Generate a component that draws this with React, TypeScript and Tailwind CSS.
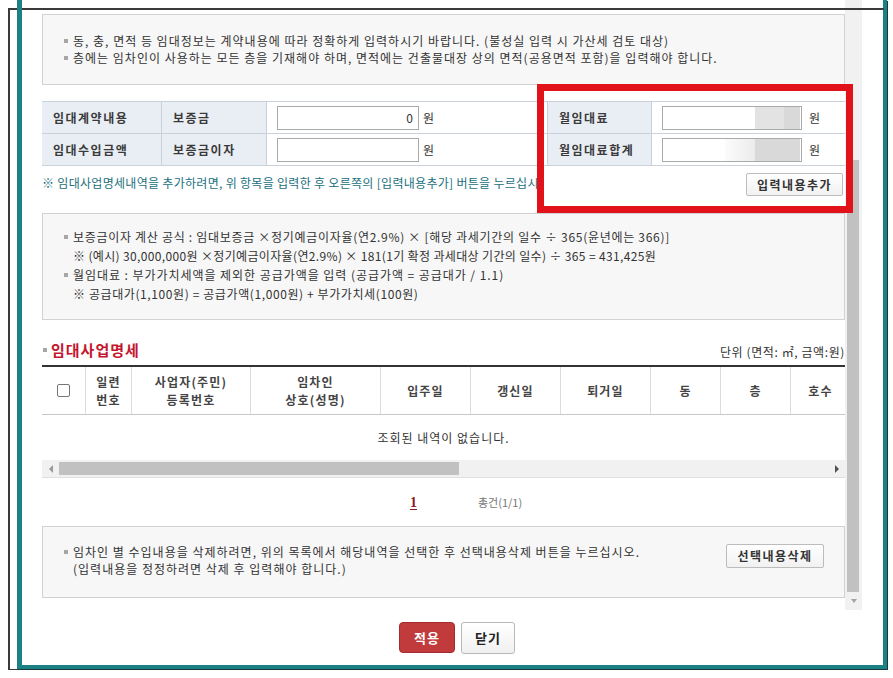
import React from "react";

const Bullet = ({ className = "" }: { className?: string }) => (
  <span className={"inline-block w-[4px] h-[4px] bg-[#a6a6a6] shrink-0 " + className} />
);

function MaskedInput({ row }: { row: 1 | 2 }) {
  return (
    <div className="w-[140px] h-[24px] border border-[#aaaaaa] bg-white flex justify-end pr-[1px]">
      {row === 1 ? (
        <>
          <div className="w-[29px] h-full bg-[#e3e3e3]" />
          <div className="w-[16px] h-full bg-[#d9d9d9]" />
        </>
      ) : (
        <>
          <div className="w-[30px] h-full bg-gradient-to-r from-[#fbfbfb] to-[#ececec]" />
          <div className="w-[45px] h-full bg-[#d9d9d9]" />
        </>
      )}
    </div>
  );
}

const headCols: { w: string; label: React.ReactNode }[] = [
  { w: "w-[46px]", label: <>일련<br />번호</> },
  { w: "w-[119px]", label: <>사업자(주민)<br />등록번호</> },
  { w: "w-[130px]", label: <>임차인<br />상호(성명)</> },
  { w: "w-[90px]", label: "입주일" },
  { w: "w-[90px]", label: "갱신일" },
  { w: "w-[90px]", label: "퇴거일" },
  { w: "w-[70px]", label: "동" },
  { w: "w-[70px]", label: "층" },
  { w: "w-[60px]", label: "호수" },
  { w: "w-[90px]", label: "전용면적" },
  { w: "w-[90px]", label: "공용면적" },
  { w: "w-[110px]", label: "보증금" },
  { w: "w-[110px]", label: "월임대료" },
];

const label =
  "bg-[#e9eef5] border-[#c9d1dc] flex items-center font-bold text-[12px] tracking-[1.5px] text-[#3a3a3a]";

const btn =
  "border border-[#bcbcbc] rounded-[2px] bg-gradient-to-b from-white to-[#f1f1f1] font-bold tracking-[1.5px] text-[#333] text-[12px] leading-none";

export default function App() {
  return (
    <div className="relative w-[893px] h-[678px] bg-white overflow-hidden font-['Noto_Sans_CJK_KR',sans-serif] text-[12px] text-[#333]">
      {/* window frame behind */}
      <div className="absolute left-[8px] top-[8px] w-[877px] h-[662px] border-l-2 border-t-2 border-b border-[#3a3a3a]" />

      {/* main panel */}
      <div className="relative ml-[17px] w-[870px] h-[669px] bg-white border-l-[5px] border-r-4 border-b-4 border-[#1b8184] shadow-[1px_1px_0_#163a3c] flex flex-col">
        <div className="flex h-[610px]">
          <div className="w-[823px] pl-[20px] overflow-hidden">
            <div className="w-[803px]">
              {/* info box 1 */}
              <div className="mt-[14px] h-[71px] border border-[#d2d2d2] bg-[#f7f7f7] pt-[17px] pl-[21px] leading-[17px] tracking-[1px] whitespace-nowrap">
                <div className="flex items-center">
                  <Bullet className="mr-[5px]" />
                  <span>동, 충, 면적 등 임대정보는 계약내용에 따라 정확하게 입력하시기 바랍니다. (불성실 입력 시 가산세 검토 대상)</span>
                </div>
                <div className="flex items-center">
                  <Bullet className="mr-[5px]" />
                  <span>층에는 임차인이 사용하는 모든 층을 기재해야 하며, 면적에는 건출물대장 상의 면적(공용면적 포함)을 입력해야 합니다.</span>
                </div>
              </div>

              {/* form table */}
              <div className="mt-[16px] border-t border-[#c9d1dc]">
                {[1, 2].map((r) => (
                  <div key={r} className="flex h-[32px] border-b border-[#c9d1dc]">
                    <div className={"w-[120px] border-r pl-[11px] " + label}>
                      {r === 1 ? "임대계약내용" : "임대수입금액"}
                    </div>
                    <div className={"w-[105px] border-r pl-[11px] " + label}>
                      {r === 1 ? "보증금" : "보증금이자"}
                    </div>
                    <div className="w-[280px] pl-[10px] flex items-center">
                      <div className="w-[142px] h-[24px] border border-[#aaaaaa] bg-white flex items-center justify-end pr-[5px]">
                        {r === 1 ? "0" : ""}
                      </div>
                      <span className="ml-[4px]">원</span>
                    </div>
                    <div className={"w-[105px] border-x pl-[11px] " + label}>
                      {r === 1 ? "월임대료" : "월임대료합계"}
                    </div>
                    <div className="flex-1 pl-[10px] flex items-center">
                      <MaskedInput row={r as 1 | 2} />
                      <span className="ml-[7px]">원</span>
                    </div>
                  </div>
                ))}
              </div>

              {/* note row */}
              <div className="h-[47px] flex justify-between items-start pt-[7px]">
                <div className="w-[502px] overflow-hidden whitespace-nowrap mt-[1px] leading-[17px] text-[#21707d] tracking-[0.3px]">
                  ※ 임대사업명세내역을 추가하려면, 위 항목을 입력한 후 오른쪽의 [입력내용추가] 버튼을 누르십시오.
                </div>
                <button className={"mr-[2px] w-[97px] h-[23px] " + btn}>입력내용추가</button>
              </div>

              {/* info box 2 */}
              <div className="h-[107px] border border-[#d2d2d2] bg-[#f7f7f7] pt-[13px] pl-[21px] leading-[19px] whitespace-nowrap">
                <div className="flex items-center tracking-[0.7px]">
                  <Bullet className="mr-[5px]" />
                  <span>보증금이자 계산 공식 : 임대보증금 ×정기예금이자율(연2.9%) × [해당 과세기간의 일수 ÷ 365(윤년에는 366)]</span>
                </div>
                <div className="pl-[9px] tracking-[0.35px]">※ (예시) 30,000,000원 ×정기예금이자율(연2.9%) × 181(1기 확정 과세대상 기간의 일수) ÷ 365 = 431,425원</div>
                <div className="flex items-center tracking-[0.95px]">
                  <Bullet className="mr-[5px]" />
                  <span>월임대료 : 부가가치세액을 제외한 공급가액을 입력 (공급가액 = 공급대가 / 1.1)</span>
                </div>
                <div className="pl-[9px] tracking-[0.6px]">※ 공급대가(1,100원) = 공급가액(1,000원) + 부가가치세(100원)</div>
              </div>

              {/* section title */}
              <div className="h-[45px] flex items-end justify-between pb-[5px]">
                <div className="flex items-center">
                  <Bullet className="ml-[1px] mr-[4px] w-[3px] h-[3px]" />
                  <span className="text-[15px] leading-[20px] font-bold text-[#c4162e] tracking-[1px]">임대사업명세</span>
                </div>
                <span className="leading-[17px] text-[#333] tracking-[0.6px]">단위 (면적: ㎡, 금액:원)</span>
              </div>

              {/* data table */}
              <div className="border-t-2 border-[#333]">
                <div className="flex h-[48px] border-b border-[#c8c8c8] overflow-hidden">
                  <div className="w-[44px] shrink-0 border-r border-[#dcdcdc] flex items-center justify-center">
                    <span className="w-[13px] h-[13px] border border-[#767676] rounded-[2px] bg-white" />
                  </div>
                  {headCols.map((c, i) => (
                    <div
                      key={i}
                      className={c.w + " shrink-0 border-r border-[#dcdcdc] flex items-center justify-center text-center font-bold text-[12px] leading-[18px] text-[#444] tracking-[1.2px]"}
                    >
                      <span>{c.label}</span>
                    </div>
                  ))}
                </div>
                <div className="h-[45px] flex items-center justify-center text-[#333] tracking-[1px]">
                  조회된 내역이 없습니다.
                </div>
                {/* horizontal scrollbar */}
                <div className="h-[18px] bg-[#f1f1f1] border-b border-[#e0e0e0] flex items-center">
                  <div className="w-[17px] flex items-center justify-center">
                    <span className="w-0 h-0 border-y-[4px] border-y-transparent border-r-[4px] border-r-[#9a9a9a]" />
                  </div>
                  <div className="w-[400px] h-[13px] bg-[#c1c1c1]" />
                  <div className="flex-1" />
                  <div className="w-[17px] flex items-center justify-center">
                    <span className="w-0 h-0 border-y-[4px] border-y-transparent border-l-[4px] border-l-[#505050]" />
                  </div>
                </div>
              </div>

              {/* pagination */}
              <div className="h-[48px] flex items-center pl-[368px]">
                <span className="font-['Liberation_Serif',serif] font-bold text-[14px] text-[#8b1c24] underline underline-offset-2">1</span>
                <span className="ml-[61px] text-[11px] text-[#777]">총건(1/1)</span>
              </div>

              {/* info box 3 */}
              <div className="h-[72px] border border-[#d2d2d2] bg-[#f7f7f7] pt-[16px] pl-[21px] pr-[20px] flex justify-between items-start leading-[17px] tracking-[1px] whitespace-nowrap">
                <div>
                  <div className="flex items-center">
                    <Bullet className="mr-[5px]" />
                    <span>임차인 별 수입내용을 삭제하려면, 위의 목록에서 해당내역을 선택한 후 선택내용삭제 버튼을 누르십시오.</span>
                  </div>
                  <div className="pl-[9px]">(입력내용을 정정하려면 삭제 후 입력해야 합니다.)</div>
                </div>
                <button className={"mt-[1px] w-[98px] h-[24px] " + btn}>선택내용삭제</button>
              </div>
            </div>
          </div>

          {/* vertical scrollbar */}
          <div className="w-[17px] h-[610px] bg-[#f1f1f1] flex flex-col">
            <div className="h-[160px]" />
            <div className="ml-[2px] w-[12px] h-[432px] bg-[#c1c1c1]" />
            <div className="flex-1 flex items-center justify-center">
              <span className="w-0 h-0 border-x-[3px] border-x-transparent border-t-[4px] border-t-[#a3a3a3]" />
            </div>
          </div>
        </div>

        {/* bottom buttons */}
        <div className="flex justify-center pl-[9px] pt-[12px] gap-[6px]">
          <button className="w-[56px] h-[31px] rounded-[4px] bg-[#c13a3c] border border-[#a22d2f] text-white text-[13px] font-bold tracking-[1px]">
            적용
          </button>
          <button className="w-[54px] h-[32px] rounded-[3px] bg-gradient-to-b from-white to-[#f0f0f0] border border-[#b8b8b8] text-[#222] text-[13px] font-bold tracking-[1px]">
            닫기
          </button>
        </div>
      </div>

      {/* top frame line over content */}
      <div className="absolute left-[22px] top-[8px] w-[862px] h-[2px] bg-[#3a3a3a]" />

      {/* red annotation box */}
      <div className="absolute left-[537px] top-[84px] w-[316px] h-[129px] border-[7px] border-[#e2121a]" />
    </div>
  );
}
